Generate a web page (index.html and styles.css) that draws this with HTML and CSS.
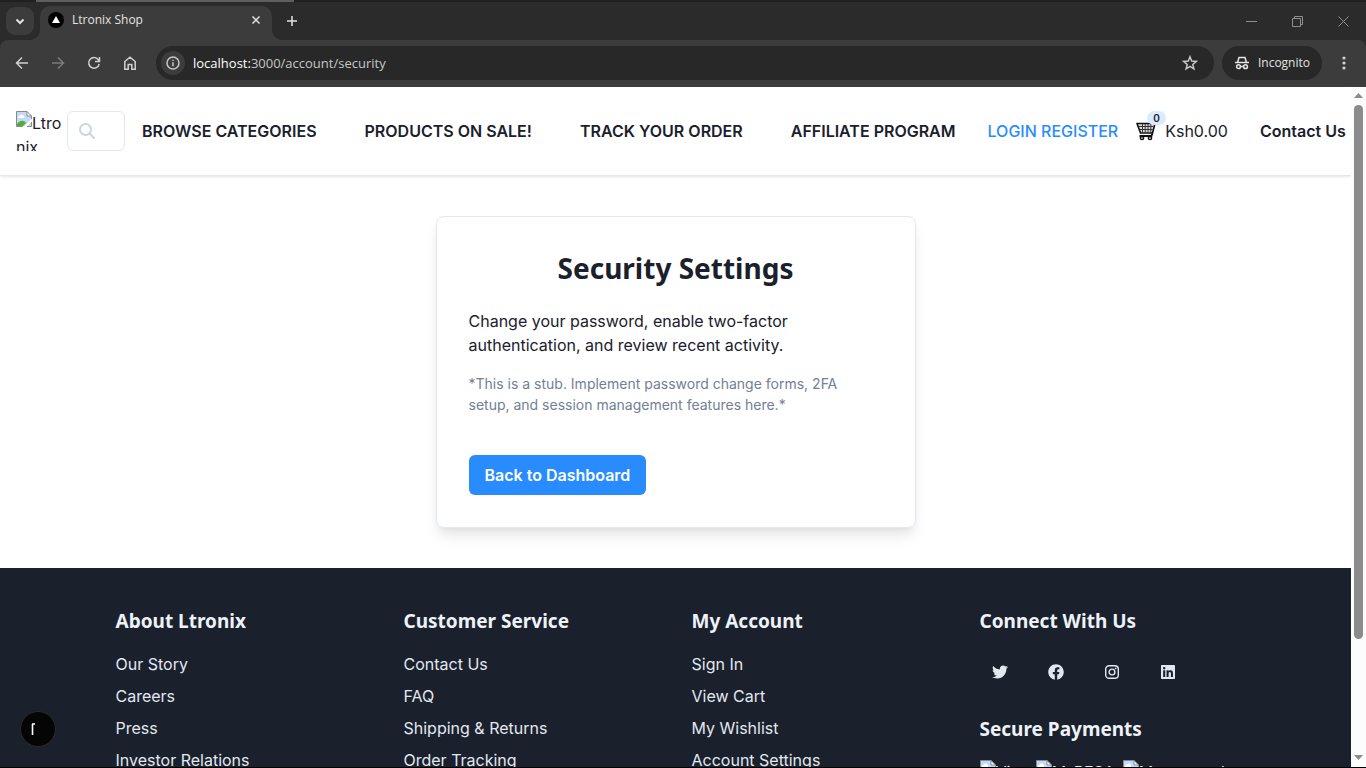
FILE: index.html
```html
<!DOCTYPE html>
<html lang="en">
<head>
<meta charset="utf-8">
<title>Ltronix Shop</title>
<link rel="stylesheet" href="styles.css">
</head>
<body>
<svg class="defs" aria-hidden="true">
  <symbol id="broken" viewBox="0 0 16 16">
    <path d="M.5.5H11L15.5 5v10.500H.5z" fill="#c3d9f8"/>
    <path d="M2 6.500a2 2 0 0 1 2-2 2 2 0 0 1 3.500 0A1.500 1.500 0 0 1 8 7H2z" fill="#fff"/>
    <path d="M1 15v-2c3-4 7-4 9-1l-3 3z" fill="#4fae33"/>
    <path d="M15.500 8 7.500 16h3l5-5z" fill="#fff"/>
    <path d="M11 .500V5h4.500z" fill="#fff"/>
    <path d="M6.500 15.500H.5V.5H11L15.500 5v3M11 .500V5h4.500M11 15.500h4.500V11" fill="none" stroke="#8b8b8b"/>
  </symbol>
</svg>

<div class="desktop-edge"><span class="edge-light"></span></div>
<div class="tabs">
  <button class="tab-search" aria-label="Search tabs"><svg width="12" height="12" viewBox="0 0 12 12"><path d="m2.500 4.500 3.500 3.500 3.500-3.500"/></svg></button>
  <div class="tab">
    <svg class="favicon" width="16" height="16" viewBox="0 0 16 16"><circle cx="8" cy="8" r="8" fill="#000"/><path d="m8 4 4 7H4z" fill="#fff"/></svg>
    <span class="tab-title">Ltronix Shop</span>
    <button class="tab-close" aria-label="Close tab"><svg width="10" height="10" viewBox="0 0 10 10"><path d="m1.500 1.500 7 7m0-7-7 7"/></svg></button>
  </div>
  <button class="new-tab" aria-label="New tab"><svg width="12" height="12" viewBox="0 0 12 12"><path d="M6 1v10M1 6h10"/></svg></button>
  <div class="window-buttons">
    <button aria-label="Minimize"><svg width="11" height="11" viewBox="0 0 11 11"><path d="M0 5.500h11"/></svg></button>
    <button aria-label="Restore"><svg width="11" height="11" viewBox="0 0 11 11"><path d="M.5 2.500h8v8h-8zM2.500 2.500v-2h8v8h-2"/></svg></button>
    <button aria-label="Close"><svg width="11" height="11" viewBox="0 0 11 11"><path d="m.5.5 10 10m0-10-10 10"/></svg></button>
  </div>
</div>

<div class="toolbar">
  <div class="tools">
    <button aria-label="Back"><svg width="16" height="16" viewBox="0 0 16 16"><path d="M14 8H3m5-5.500L2.500 8 8 13.500"/></svg></button>
    <button class="dim" aria-label="Forward"><svg width="16" height="16" viewBox="0 0 16 16"><path d="M2 8h11M8 2.500 13.500 8 8 13.500"/></svg></button>
    <button aria-label="Reload"><svg width="16" height="16" viewBox="0 0 16 16"><path d="M13.200 9A5.300 5.300 0 1 1 12.300 4.800L13.500 6M13.500 2v4.500H9"/></svg></button>
    <button aria-label="Home"><svg width="16" height="16" viewBox="0 0 16 16"><path d="M2.800 6.500 8 2.200l5.200 4.300v7.700h-3.400V9.500H6.200v4.700H2.800z"/></svg></button>
  </div>
  <div class="address">
    <button class="site-info" aria-label="Site information"><svg width="14" height="14" viewBox="0 0 14 14"><circle cx="7" cy="7" r="6"/><path d="M7 6.200v4M7 3.700v1.400"/></svg></button>
    <span class="url"><span class="host">localhost:</span>3000/account/security</span>
    <button class="star" aria-label="Bookmark"><svg width="16" height="16" viewBox="0 0 16 16"><path d="m8 1.800 1.700 4.300 4.600.3-3.500 3 1.100 4.500L8 11.400l-3.900 2.500 1.100-4.500-3.500-3 4.600-.3z"/></svg></button>
  </div>
  <div class="incognito">
    <svg width="16" height="16" viewBox="0 0 16 16"><path d="M3.700 7 5 2.500h6L12.300 7M1 7.500h14"/><circle cx="4.500" cy="11.700" r="1.900"/><circle cx="11.500" cy="11.700" r="1.900"/><path d="M6.400 11.500h3.200"/></svg>
    <span>Incognito</span>
  </div>
  <button class="menu" aria-label="Menu"><svg width="4" height="16" viewBox="0 0 4 16"><circle cx="2" cy="3" r="1.600"/><circle cx="2" cy="8" r="1.600"/><circle cx="2" cy="13" r="1.600"/></svg></button>
</div>

<div class="viewport">
  <div class="page">
    <header class="site-header">
      <a class="logo" href="#"><svg width="16" height="16"><use href="#broken"/></svg>Ltronix</a>
      <label class="search">
        <svg width="16" height="16" viewBox="0 0 16 16"><circle cx="6.500" cy="6.500" r="5.500"/><path d="m10.500 10.500 5 5"/></svg>
        <input type="search" aria-label="Search products">
      </label>
      <nav class="nav">
        <a href="#">BROWSE CATEGORIES</a>
        <a href="#">PRODUCTS ON SALE!</a>
        <a href="#">TRACK YOUR ORDER</a>
        <a href="#">AFFILIATE PROGRAM</a>
      </nav>
      <a class="login" href="#">LOGIN REGISTER</a>
      <a class="cart" href="#" aria-label="Cart">
        <span class="cart-icon">
          <svg width="20" height="20" viewBox="0 0 20 20"><path d="M1 2.500h18l-2.500 9.500H4.500z" fill="#ddd" stroke="#111" stroke-width="1.600" stroke-linejoin="round"/><path d="M3 5.500h14M4 8.500h12.500M6.500 3v8.500M9.200 3v8.500M12 3v8.500M14.800 3v8.500" stroke="#333" fill="none"/><path d="M16.500 12 15.500 15H3.500" fill="none" stroke="#111" stroke-width="1.800"/><circle cx="6" cy="17" r="1.600" fill="#fff" stroke="#111" stroke-width="1.500"/><circle cx="14" cy="17" r="1.600" fill="#fff" stroke="#111" stroke-width="1.500"/></svg>
          <span class="badge">0</span>
        </span>
        <span>Ksh0.00</span>
      </a>
      <a class="contact" href="#">Contact Us</a>
    </header>

    <main class="main">
      <section class="card">
        <h1>Security Settings</h1>
        <p>Change your password, enable two-factor authentication, and review recent activity.</p>
        <p class="note">*This is a stub. Implement password change forms, 2FA setup, and session management features here.*</p>
        <button class="primary">Back to Dashboard</button>
      </section>
    </main>

    <footer class="footer">
      <div class="footer-grid">
        <section>
          <h2>About Ltronix</h2>
          <ul>
            <li><a href="#">Our Story</a></li>
            <li><a href="#">Careers</a></li>
            <li><a href="#">Press</a></li>
            <li><a href="#">Investor Relations</a></li>
          </ul>
        </section>
        <section>
          <h2>Customer Service</h2>
          <ul>
            <li><a href="#">Contact Us</a></li>
            <li><a href="#">FAQ</a></li>
            <li><a href="#">Shipping &amp; Returns</a></li>
            <li><a href="#">Order Tracking</a></li>
          </ul>
        </section>
        <section>
          <h2>My Account</h2>
          <ul>
            <li><a href="#">Sign In</a></li>
            <li><a href="#">View Cart</a></li>
            <li><a href="#">My Wishlist</a></li>
            <li><a href="#">Account Settings</a></li>
          </ul>
        </section>
        <section>
          <h2>Connect With Us</h2>
          <div class="social">
            <a href="#" aria-label="Twitter"><svg width="16" height="16" viewBox="0 0 512 512"><path d="M459.370 151.716c.325 4.548.325 9.097.325 13.645 0 138.720-105.583 298.558-298.558 298.558-59.452 0-114.680-17.219-161.137-47.106 8.447.974 16.568 1.299 25.340 1.299 49.055 0 94.213-16.568 130.274-44.832-46.132-.975-84.792-31.188-98.112-72.772 6.498.974 12.995 1.624 19.818 1.624 9.421 0 18.843-1.300 27.614-3.573-48.081-9.747-84.143-51.980-84.143-102.985v-1.299c13.969 7.797 30.214 12.670 47.431 13.319-28.264-18.843-46.781-51.005-46.781-87.391 0-19.492 5.197-37.360 14.294-52.954 51.655 63.675 129.300 105.258 216.365 109.807-1.624-7.797-2.599-15.918-2.599-24.040 0-57.828 46.782-104.934 104.934-104.934 30.213 0 57.502 12.670 76.670 33.137 23.715-4.548 46.456-13.320 66.599-25.340-7.798 24.366-24.366 44.833-46.132 57.827 21.117-2.273 41.584-8.122 60.426-16.243-14.292 20.791-32.161 39.308-52.628 54.253z"/></svg></a>
            <a href="#" aria-label="Facebook"><svg width="16" height="16" viewBox="0 0 512 512"><path d="M504 256C504 119 393 8 256 8S8 119 8 256c0 123.780 90.690 226.380 209.250 245V327.690h-63V256h63v-54.640c0-62.150 37-96.480 93.670-96.480 27.140 0 55.520 4.840 55.520 4.840v61h-31.280c-30.800 0-40.410 19.120-40.410 38.730V256h68.780l-11 71.690h-57.780V501C413.310 482.380 504 379.780 504 256z"/></svg></a>
            <a href="#" aria-label="Instagram"><svg width="16" height="16" viewBox="0 0 16 16"><rect x="1.700" y="1.700" width="12.600" height="12.600" rx="3.400" fill="none" stroke="#e2e8f0" stroke-width="1.400"/><circle cx="8" cy="8" r="2.900" fill="none" stroke="#e2e8f0" stroke-width="1.400"/><circle cx="11.700" cy="4.300" r=".9"/></svg></a>
            <a href="#" aria-label="LinkedIn"><svg width="14" height="16" viewBox="0 0 448 512"><path d="M416 32H31.900C14.300 32 0 46.500 0 64.300v383.400C0 465.500 14.300 480 31.900 480H416c17.600 0 32-14.500 32-32.300V64.300c0-17.800-14.400-32.300-32-32.300zM135.400 416H69V202.200h66.500V416zm-33.200-243c-21.300 0-38.500-17.300-38.500-38.500S80.900 96 102.200 96c21.200 0 38.500 17.300 38.500 38.500 0 21.300-17.200 38.500-38.500 38.500zm282.100 243h-66.400V312c0-24.800-.5-56.700-34.500-56.700-34.600 0-39.900 27-39.900 54.900V416h-66.400V202.200h63.700v29.200h.9c8.900-16.800 30.600-34.500 62.200-34.500 66.500 0 78.900 43.800 78.900 100.900V416z"/></svg></a>
          </div>
          <h2>Secure Payments</h2>
          <div class="payments">
            <span><svg width="16" height="16"><use href="#broken"/></svg>Visa</span>
            <span><svg width="16" height="16"><use href="#broken"/></svg>M-PESA</span>
            <span><svg width="16" height="16"><use href="#broken"/></svg>Mastercard</span>
          </div>
        </section>
      </div>
    </footer>
  </div>
  <div class="scrollbar" aria-hidden="true">
    <svg width="9" height="5" viewBox="0 0 9 5"><path d="M4.500 0 9 5H0z"/></svg>
    <div class="track"><div class="thumb"></div></div>
    <svg width="9" height="5" viewBox="0 0 9 5"><path d="M0 0h9L4.500 5z"/></svg>
  </div>
  <button class="dev-badge" aria-label="Developer tools"><svg width="12" height="14" viewBox="0 0 12 14"><path d="M1.500 13V2M1 2h3" fill="none" stroke="#fff" stroke-width="1.600"/></svg></button>
</div>
</body>
</html>
```

FILE: styles.css
```css
* { box-sizing: border-box; }

body {
  margin: 0;
  height: 100vh;
  display: flex;
  flex-direction: column;
  overflow: hidden;
  border-bottom: 1px solid #000;
  background: #2b2b2b;
  color: #1a202c;
  font: 400 16px/24px Inter, sans-serif;
}

button {
  padding: 0;
  border: 0;
  background: none;
  color: inherit;
  font: inherit;
}

a { color: inherit; text-decoration: none; }
h1, h2, p, ul { margin: 0; }
.defs { position: absolute; width: 0; height: 0; }

/* Browser frame */
.desktop-edge { flex: none; height: 2px; padding-left: 36px; background: #202020; }
.edge-light { display: block; width: 258px; height: 2px; background: #5e5e5e; }

.tabs {
  flex: none;
  display: flex;
  align-items: center;
  height: 38px;
  padding-left: 6px;
  background: #2b2b2b;
  color: #e3e3e3;
  font: 12px/16px "Open Sans", sans-serif;
}

.tabs button, .toolbar button {
  display: flex;
  align-items: center;
  justify-content: center;
}

.tabs svg, .toolbar svg { flex: none; fill: none; stroke: currentColor; stroke-width: 1.5; }

.tab-search { width: 28px; height: 28px; border-radius: 9px; background: #3c3c3c; }
.tabs .tab-search svg { stroke-width: 2; }

.tab {
  position: relative;
  align-self: flex-end;
  display: flex;
  align-items: center;
  gap: 8px;
  width: 232px;
  height: 34px;
  margin-left: 6px;
  padding: 0 10px 6px 8px;
  border-radius: 10px 10px 0 0;
  background: #3c3c3c;
}

.tab::before, .tab::after {
  content: "";
  position: absolute;
  bottom: 0;
  width: 10px;
  height: 10px;
}
.tab::before { right: 100%; background: radial-gradient(circle at 0 0, transparent 10px, #3c3c3c 10px); }
.tab::after { left: 100%; background: radial-gradient(circle at 100% 0, transparent 10px, #3c3c3c 10px); }

.tabs .favicon { stroke: none; }
.tab-title { flex: 1; }
.tab-close { width: 12px; height: 16px; }
.new-tab { width: 40px; height: 28px; }

.window-buttons { display: flex; margin-left: auto; color: #8f8f8f; }
.window-buttons button { width: 46px; height: 28px; }
.tabs .window-buttons svg { stroke-width: 1; }

.toolbar {
  flex: none;
  display: flex;
  align-items: center;
  gap: 8px;
  height: 47px;
  padding: 0 0 1px 4px;
  border-radius: 8px 8px 0 0;
  background: #3c3c3c;
  color: #d0d0d0;
  font: 13px/20px "Open Sans", sans-serif;
}

.tools { display: flex; }
.tools button { width: 36px; height: 34px; }
.toolbar .dim { color: #7a7a7a; }

.address {
  flex: 1;
  display: flex;
  align-items: center;
  gap: 8px;
  height: 34px;
  padding: 0 16px 0 5px;
  border-radius: 17px;
  background: #282828;
  color: #c7c7c7;
}

.site-info { width: 24px; height: 24px; border-radius: 50%; background: #3c3c3c; }
.url { flex: 1; }
.host { color: #fff; }

.incognito {
  display: flex;
  align-items: center;
  gap: 8px;
  height: 34px;
  padding: 0 12px;
  border-radius: 17px;
  background: #282828;
  color: #e3e3e3;
  font-size: 12px;
}

.menu { width: 28px; height: 34px; margin-right: 8px; }
.toolbar .menu svg { fill: currentColor; stroke: none; }

/* Page */
.viewport { position: relative; flex: 1; min-height: 0; display: flex; background: #fff; }
.page { flex: 1; min-width: 0; overflow: hidden; }

.scrollbar {
  display: flex;
  flex-direction: column;
  align-items: center;
  gap: 7px;
  width: 15px;
  padding: 6px 0 7px;
  background: #fcfcfc;
  fill: #8b8b8b;
}
.scrollbar svg { flex: none; }
.track { flex: 1; }
.thumb { width: 9px; height: 83%; border-radius: 5px; background: #8b8b8b; }

.site-header {
  display: flex;
  align-items: center;
  padding: 24px 0 24px 16px;
  border-bottom: 1px solid #e2e8f0;
  box-shadow: 0 1px 3px rgba(0, 0, 0, .1);
  white-space: nowrap;
}

.logo {
  flex: none;
  width: 48px;
  height: 40px;
  overflow: hidden;
  white-space: normal;
  word-break: break-all;
}
.logo svg { float: left; }
.logo svg, .payments svg { fill: none; }

.search { position: relative; flex: none; width: 58px; height: 40px; margin-left: 3px; }
.search svg { position: absolute; top: 12px; left: 12px; fill: none; stroke: #cbd5e0; stroke-width: 2; }
.search input {
  width: 100%;
  height: 100%;
  padding: 0 12px 0 40px;
  border: 1px solid #e2e8f0;
  border-radius: 6px;
  background: none;
  font: inherit;
}

.nav { display: flex; gap: 48px; margin-left: 17px; font-weight: 600; }
.login { margin-left: 32px; color: #288cff; font-weight: 500; }
.cart { display: flex; align-items: center; gap: 9px; margin-left: 18px; }
.cart-icon { position: relative; display: flex; }
.badge {
  position: absolute;
  top: -10px;
  left: 11px;
  padding: 0 6px;
  border-radius: 8px;
  background: #dbebff;
  font-size: 10px;
  font-weight: 600;
  line-height: 14px;
}
.contact { margin-left: 32px; font-weight: 600; }

.main { display: flex; justify-content: center; padding: 40px 16px; }

.card {
  width: 480px;
  padding: 32px;
  border: 1px solid #e2e8f0;
  border-radius: 8px;
  box-shadow: 0 10px 15px -3px rgba(0, 0, 0, .1), 0 4px 6px -2px rgba(0, 0, 0, .05);
}

.card h1 {
  margin-bottom: 22px;
  font: 700 28px/38px "Noto Sans", sans-serif;
  text-align: center;
}

.card .note {
  margin-top: 16px;
  padding-right: 24px;
  color: #718096;
  font-size: 14px;
  line-height: 21px;
}

.primary {
  height: 40px;
  margin-top: 40px;
  padding: 0 16px;
  border-radius: 6px;
  background: #288cff;
  color: #fff;
  font-weight: 600;
}
.card .primary { display: block; }

.footer { padding: 40px; background: #1a202c; color: #e2e8f0; }
.footer-grid {
  display: grid;
  grid-template-columns: repeat(4, 1fr);
  gap: 32px;
  max-width: 1120px;
  margin: 0 auto;
}
.footer h2 { margin-bottom: 18px; color: #edf2f7; font: 700 19px/26px "Noto Sans", sans-serif; }
.footer ul { display: grid; gap: 8px; padding: 0; list-style: none; }

.social { display: flex; gap: 16px; margin-bottom: 24px; fill: #e2e8f0; }
.social a { display: flex; align-items: center; justify-content: center; width: 40px; height: 40px; }

.payments { display: flex; gap: 8px; }
.payments span { display: flex; }

.dev-badge {
  position: absolute;
  bottom: 20px;
  left: 20px;
  display: flex;
  align-items: center;
  padding-left: 10px;
  width: 36px;
  height: 36px;
  border: 1px solid #2b2b2b;
  border-radius: 50%;
  background: #050505;
}
```
